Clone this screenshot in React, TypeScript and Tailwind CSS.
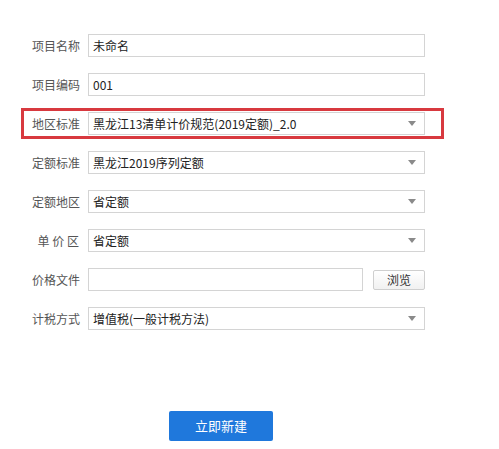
import React from 'react';

type Row = { label: string; value: string; kind: 'input' | 'select' | 'file'; highlight?: boolean };

const rows: Row[] = [
    { label: '项目名称', value: '未命名', kind: 'input' },
    { label: '项目编码', value: '001', kind: 'input' },
    { label: '地区标准', value: '黑龙江13清单计价规范(2019定额)_2.0', kind: 'select', highlight: true },
    { label: '定额标准', value: '黑龙江2019序列定额', kind: 'select' },
    { label: '定额地区', value: '省定额', kind: 'select' },
    { label: '单 价 区', value: '省定额', kind: 'select' },
    { label: '价格文件', value: '', kind: 'file' },
    { label: '计税方式', value: '增值税(一般计税方法)', kind: 'select' },
];

const Arrow = () => (
    <svg width="8" height="5" viewBox="0 0 8 5" className="shrink-0">
        <path d="M0 0 L8 0 L4 5 Z" fill="#8a8a8a" />
    </svg>
);

const FormRow: React.FC<{ row: Row }> = ({ row }) => (
    <div
        className={`flex items-center h-[31px] pl-[8px] pr-[16px] border-[3px] ${
            row.highlight ? 'border-[#d8393f]' : 'border-transparent'
        }`}
    >
        <label className="w-[47px] text-right text-[12px] text-[#555] whitespace-pre shrink-0">{row.label}</label>
        <div className="ml-[9px] flex-1 flex items-center gap-[10px] h-[23px]">
            {row.kind === 'file' ? (
                <>
                    <div className="h-full flex-1 border border-[#d4d4d4] bg-white" />
                    <button className="h-[20px] w-[52px] border border-[#cfcfcf] rounded-[2px] bg-gradient-to-b from-white to-[#f1f1f1] text-[12px] text-[#333]">
                        浏览
                    </button>
                </>
            ) : (
                <div className="h-full flex-1 flex items-center justify-between border border-[#d4d4d4] bg-white pl-[4px] pr-[8px]">
                    <span className="text-[12px] text-[#222] whitespace-nowrap">{row.value}</span>
                    {row.kind === 'select' && <Arrow />}
                </div>
            )}
        </div>
    </div>
);

export default function App() {
    return (
        <div
            className="w-[499px] h-[449px] bg-white overflow-hidden"
            style={{ fontFamily: '"Noto Sans CJK SC", "Noto Sans", sans-serif' }}
        >
            <div className="ml-[21px] w-[423px] pt-[30px] flex flex-col gap-[8px]">
                {rows.map((r) => (
                    <FormRow key={r.label} row={r} />
                ))}
            </div>
            <div className="mt-[77px] ml-[169px]">
                <button className="w-[104px] h-[30px] bg-[#1f78dc] rounded-[2px] text-white text-[13px]">立即新建</button>
            </div>
        </div>
    );
}
